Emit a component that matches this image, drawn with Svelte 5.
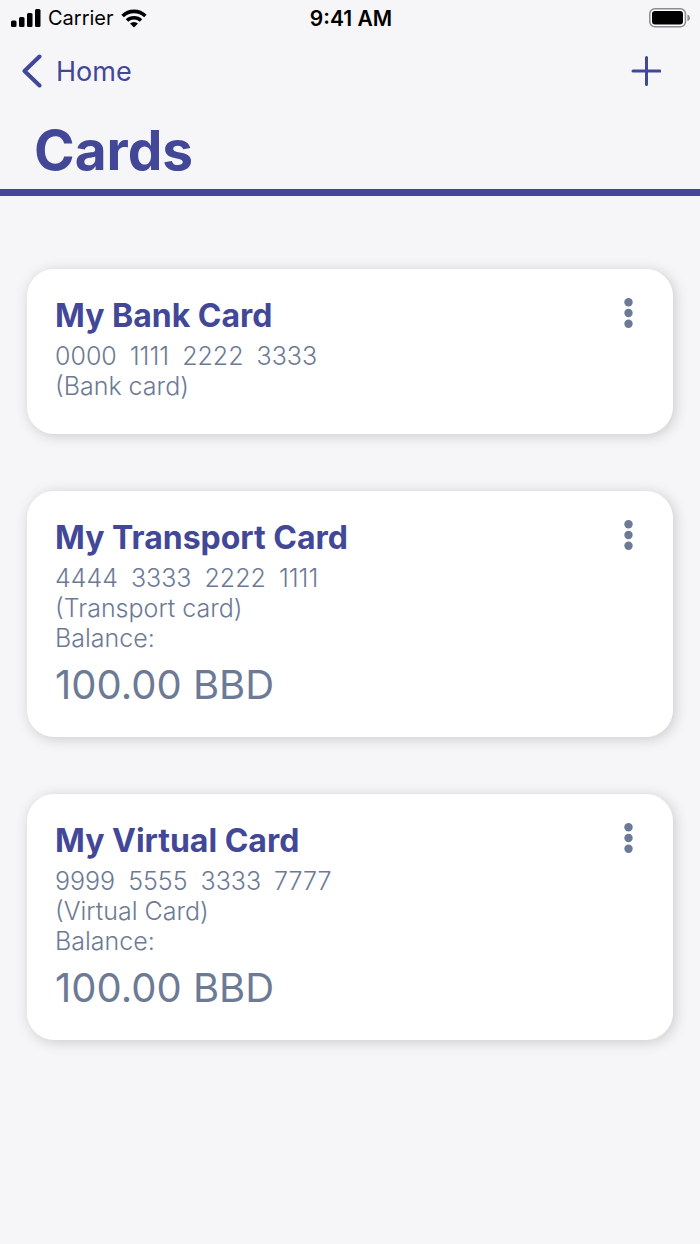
<script lang="ts">
	interface Card {
		id: string;
		name: string;
		digits: string[];
		kind: string;
		balance?: string;
	}

	const cards: Card[] = [
		{
			id: 'bank',
			name: 'My Bank Card',
			digits: ['0000', '1111', '2222', '3333'],
			kind: 'Bank card'
		},
		{
			id: 'transport',
			name: 'My Transport Card',
			digits: ['4444', '3333', '2222', '1111'],
			kind: 'Transport card',
			balance: '100.00 BBD'
		},
		{
			id: 'virtual',
			name: 'My Virtual Card',
			digits: ['9999', '5555', '3333', '7777'],
			kind: 'Virtual Card',
			balance: '100.00 BBD'
		}
	];
</script>

<div class="screen">
	<div class="status">
		<div class="carrier">
			<svg width="30" height="18" viewBox="0 0 30 18" aria-hidden="true">
				<rect x="0" y="11.5" width="5.5" height="6.5" rx="1.5" />
				<rect x="8" y="8" width="5.5" height="10" rx="1.5" />
				<rect x="16" y="4" width="5.5" height="14" rx="1.5" />
				<rect x="24" y="0" width="5.5" height="18" rx="1.5" />
			</svg>
			<span>Carrier</span>
			<svg width="26" height="19" viewBox="0 0 26 19" aria-hidden="true">
				<g fill="none" stroke="#000" stroke-width="3.6">
					<path d="M1.6 7a16.4 16.4 0 0 1 22.8 0" />
					<path d="M6 11.5a10.2 10.2 0 0 1 14 0" />
				</g>
				<path d="M13 18.6l-4-4a5.7 5.7 0 0 1 8 0z" />
			</svg>
		</div>
		<time>9:41 AM</time>
		<div class="battery">
			<svg width="42" height="20" viewBox="0 0 42 20" aria-hidden="true">
				<rect x="0.8" y="0.8" width="35.6" height="18" rx="5" fill="#fff" stroke="#8c8c8e" stroke-width="1.5" />
				<rect x="3" y="3" width="31" height="13.6" rx="3" />
				<path d="M38.4 6.6a3.4 3.4 0 0 1 0 6.6z" fill="#8c8c8e" />
			</svg>
		</div>
	</div>

	<header>
		<nav>
			<a class="back" href="#home">
				<svg width="22" height="34" viewBox="0 0 22 34" aria-hidden="true">
					<path d="M17.5 2.5L2.5 17L17.5 31.5" />
				</svg>
				Home
			</a>
			<button class="add" type="button" aria-label="Add card">
				<svg width="30" height="30" viewBox="0 0 30 30" aria-hidden="true">
					<path d="M15.5 1.5v27M2 15h27" />
				</svg>
			</button>
		</nav>
		<h1>Cards</h1>
	</header>

	<main>
		{#each cards as card (card.id)}
			<article class="card">
				<div class="details">
					<h2>{card.name}</h2>
					<p class="number">
						{#each card.digits as group}
							<span>{group}</span>
						{/each}
					</p>
					<p>({card.kind})</p>
					{#if card.balance}
						<p>Balance:</p>
						<p class="amount">{card.balance}</p>
					{/if}
				</div>
				<button class="more" type="button" aria-label="Options for {card.name}">
					<svg width="9" height="30" viewBox="0 0 9 30" aria-hidden="true">
						<circle cx="4.5" cy="4.2" r="4.2" />
						<circle cx="4.5" cy="15" r="4.2" />
						<circle cx="4.5" cy="25.7" r="4.2" />
					</svg>
				</button>
			</article>
		{/each}
	</main>
</div>

<style>
	:global(body) {
		background: #f6f6f9;
		margin: 0;
	}

	.screen {
		color: #6d7a95;
		font-family: Inter, 'Liberation Sans', sans-serif;
	}

	h1,
	h2,
	p {
		margin: 0;
	}

	button {
		background: none;
		border: 0;
		cursor: pointer;
		padding: 0;
	}

	svg {
		display: block;
		flex: none;
	}

	.status {
		align-items: center;
		color: #000;
		display: grid;
		font-size: 20px;
		grid-template-columns: 1fr auto 1fr;
		height: 36px;
		padding: 0 9px 0 11px;
	}

	.carrier {
		align-items: center;
		display: flex;
		gap: 7px;
	}

	.status time {
		font-size: 21px;
		font-weight: 600;
	}

	.battery {
		display: flex;
		justify-content: flex-end;
	}

	header {
		border-bottom: 7px solid #424897;
		color: #424897;
	}

	nav {
		align-items: center;
		display: flex;
		height: 70px;
		justify-content: space-between;
		padding: 0 39px 0 22px;
	}

	.back {
		align-items: center;
		color: inherit;
		display: flex;
		font-size: 27px;
		gap: 12px;
		text-decoration: none;
	}

	.back path {
		fill: none;
		stroke: currentColor;
		stroke-linecap: round;
		stroke-linejoin: round;
		stroke-width: 4;
	}

	.add {
		color: inherit;
	}

	.add path {
		stroke: currentColor;
		stroke-linecap: round;
		stroke-width: 3;
	}

	h1 {
		font-size: 55px;
		font-weight: 700;
		line-height: 77px;
		padding: 6px 34px 0;
	}

	main {
		display: flex;
		flex-direction: column;
		gap: 57px;
		padding: 73px 27px;
	}

	.card {
		align-items: flex-start;
		background: #fff;
		border-radius: 27px;
		box-shadow: 2px 2px 14px rgba(0, 0, 0, 0.18);
		box-sizing: border-box;
		display: flex;
		justify-content: space-between;
		min-height: 165px;
		padding: 26px 40px 28px 28px;
	}

	h2 {
		color: #424897;
		font-size: 32px;
		font-weight: 700;
		line-height: 42px;
		margin-bottom: 4px;
	}

	p {
		font-size: 25px;
		font-weight: 300;
		line-height: 30px;
	}

	.number {
		display: flex;
		gap: 13px;
	}

	.amount {
		font-size: 40px;
		font-weight: 400;
		line-height: 48px;
		margin-top: 8px;
	}

	.more {
		color: inherit;
		padding-top: 3px;
	}

	.more circle {
		fill: currentColor;
	}
</style>
